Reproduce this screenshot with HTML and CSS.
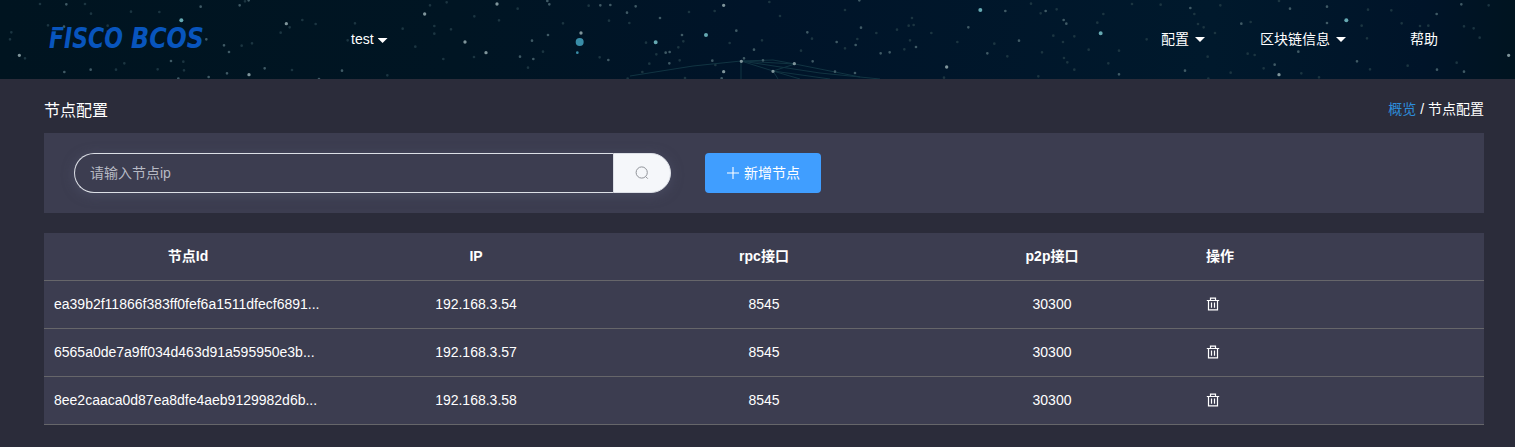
FILE: index.html
```html
<!DOCTYPE html>
<html lang="zh-CN">
<head>
<meta charset="utf-8">
<title>节点配置</title>
<link rel="stylesheet" href="styles.css">
</head>
<body>
<header class="header">
  <svg class="sky" width="1515" height="79" viewBox="0 0 1515 79" aria-hidden="true">
    <defs>
      <linearGradient id="night"><stop offset="0" stop-color="#001420"/><stop offset=".3" stop-color="#001523"/><stop offset=".5" stop-color="#001429"/><stop offset=".8" stop-color="#00192c"/><stop offset=".94" stop-color="#001429"/><stop offset="1" stop-color="#001420"/></linearGradient>
    </defs>
    <rect width="1515" height="79" fill="url(#night)"/>
    <g class="lines">
      <path d="M630 76L693 66L741 61L795 64L860 77M741 61L773 71L795 64M741 61L741 79M741 61L820 73L880 79M773 71L778 79M773 71L800 79M773 71L830 79M741 61L773 60L795 64"/>
    </g>
    <g transform="scale(.33333)">
      <path class="star faint" d="M120 12h0M144 76h0M273 41h0M34 97h0M30 118h0M255 12h0M478 36h0M323 77h0M348 209h0M373 190h0M473 208h0M550 185h0M552 211h0M75 175h0M725 137h0M756 130h0M842 98h0M869 82h0M876 210h0M1043 121h0M1065 70h0M947 72h0M907 60h0M1162 226h0M735 4h0M393 35h0M323 94h0"/>
      <path class="star mid" d="M199 13h0M192 80h0M602 20h0M719 16h0M193 216h0M272 209h0M619 118h0M672 136h0M687 156h0M513 183h0M681 220h0M626 231h0M794 205h0M1026 212h0M746 1h0M535 236h0M957 237h0"/>
      <path class="star bright" d="M58 166h0M747 224h0M859 71h0"/>
      <path class="star cyan" d="M544 61h0"/>
    </g>
    <g transform="translate(400) scale(.33333)">
      <path class="star faint" d="M90 16h0M103 78h0M103 101h0M46 140h0M140 7h0M223 49h0M297 61h0M489 70h0M627 62h0M688 69h0M429 155h0M384 203h0M130 177h0M222 171h0M353 26h0M566 17h0M599 172h0M748 191h0M727 216h0M835 142h0M850 124h0M839 181h0M855 234h0M944 33h0M989 129h0M1086 121h0M1140 48h0M1108 6h0M946 195h0M683 236h0M738 128h0M769 163h0M8 86h0M153 88h0M867 36h0"/>
      <path class="star mid" d="M442 3h0M448 13h0M601 16h0M631 15h0M707 19h0M681 38h0M444 105h0M396 122h0M360 170h0M400 177h0M625 180h0M780 54h0M846 105h0M797 158h0M809 156h0M808 190h0M1009 92h0M1062 149h0M937 182h0M1089 181h0M1032 175h0M965 235h0"/>
      <path class="star bright" d="M74 42h0M291 12h0M195 126h0M258 158h0M543 99h0M971 16h0M971 215h0M1024 184h0M1119 214h0M1183 191h0"/>
      <path class="star cyan" d="M767 127h0M918 105h0"/>
      <path class="star cyan tiny" d="M532 158h0"/>
      <path class="star giant" d="M539 126h0"/>
    </g>
    <g transform="translate(800) scale(.33333)">
      <path class="star faint" d="M36 116h0M3 152h0M135 30h0M135 145h0M172 117h0M229 99h0M291 89h0M341 75h0M326 77h0M330 121h0M313 148h0M583 131h0M472 126h0M394 99h0M722 40h0M770 28h0M760 107h0M789 126h0M823 109h0M892 68h0M910 42h0M866 149h0M792 174h0M823 209h0M802 187h0M925 190h0M957 152h0M726 157h0M715 229h0M693 11h0M622 169h0M996 12h0M432 233h0M336 54h0"/>
      <path class="star mid" d="M22 97h0M38 184h0M183 83h0M110 126h0M167 135h0M105 215h0M165 219h0M178 1h0M242 160h0M269 157h0M348 141h0M616 33h0M505 82h0M657 122h0M562 160h0M737 33h0M791 60h0M799 71h0"/>
      <path class="star bright" d="M440 201h0"/>
      <path class="star cyan" d="M541 30h0M902 100h0"/>
    </g>
    <g transform="translate(1115) scale(.33333)">
      <path class="star faint" d="M95 118h0M137 14h0M238 42h0M316 16h0M249 72h0M266 82h0M300 99h0M407 66h0M278 170h0M347 218h0M419 165h0M398 161h0M492 3h0M446 205h0M559 220h0M612 232h0M765 208h0M756 115h0M740 77h0M860 70h0M915 78h0M940 77h0M1047 79h0M1076 85h0M1121 16h0M1025 188h0M878 197h0M829 31h0M759 29h0M1094 113h0M280 236h0"/>
      <path class="star mid" d="M12 223h0M226 24h0M379 71h0M525 26h0M636 20h0M636 69h0M210 212h0M479 194h0M550 155h0M726 184h0M965 42h0M1039 13h0M966 209h0M1047 215h0M915 96h0"/>
      <path class="star bright" d="M492 224h0M1181 166h0"/>
      <path class="star cyan" d="M694 61h0"/>
    </g>
  </svg>
  <svg class="logo" width="164" height="48" viewBox="0 0 164 48">
    <text class="logo-text" x="3" y="33" textLength="74" lengthAdjust="spacingAndGlyphs">FISCO</text>
    <text class="logo-text" x="85" y="33" textLength="73" lengthAdjust="spacingAndGlyphs">BCOS</text>
    <path class="logo-cut" d="M4 15.8h14"/>
  </svg>
  <div class="group">test<i class="caret"></i></div>
  <nav class="nav">
    <span class="nav-item config">配置<i class="caret wide"></i></span>
    <span class="nav-item chain">区块链信息<i class="caret wide"></i></span>
    <span class="nav-item">帮助</span>
  </nav>
</header>
<main class="main">
  <div class="titlebar">
    <h1 class="title">节点配置</h1>
    <div class="crumbs"><a class="crumb-link">概览</a> / 节点配置</div>
  </div>
  <section class="toolbar">
    <div class="search">
      <input class="search-input" placeholder="请输入节点ip">
      <button class="search-button" aria-label="search">
        <svg width="14" height="14" viewBox="0 0 14 14"><circle cx="6.7" cy="6.5" r="5.6"/><path d="M10.8 10.7l2 2"/></svg>
      </button>
    </div>
    <button class="add">
      <svg width="14" height="14" viewBox="0 0 14 14"><path d="M7 1v12M1 7h12"/></svg><span class="add-label">新增节点</span>
    </button>
  </section>
  <svg class="symbols" width="0" height="0"><symbol id="trash" viewBox="0 0 14 14"><path d="M.8 3.5h12.4M4.5 3V1.2h5V3M2.5 3.5v9.3h9V3.5M5.5 5.5v5.2M8.5 5.5v5.2"/></symbol></svg>
  <table class="table">
    <thead><tr><th>节点Id</th><th>IP</th><th>rpc接口</th><th>p2p接口</th><th class="left">操作</th></tr></thead>
    <tbody>
      <tr><td class="left">ea39b2f11866f383ff0fef6a1511dfecf6891...</td><td>192.168.3.54</td><td>8545</td><td>30300</td><td class="left"><svg class="trash"><use href="#trash"/></svg></td></tr>
      <tr><td class="left">6565a0de7a9ff034d463d91a595950e3b...</td><td>192.168.3.57</td><td>8545</td><td>30300</td><td class="left"><svg class="trash"><use href="#trash"/></svg></td></tr>
      <tr><td class="left">8ee2caaca0d87ea8dfe4aeb9129982d6b...</td><td>192.168.3.58</td><td>8545</td><td>30300</td><td class="left"><svg class="trash"><use href="#trash"/></svg></td></tr>
    </tbody>
  </table>
</main>
</body>
</html>
```
FILE: styles.css
```css
* { box-sizing: border-box; }
body { margin: 0; height: 447px; overflow: hidden; background: #2b2c3a; color: #fff; font: 14px "Liberation Sans", "Noto Sans CJK SC", sans-serif; }
.header { position: relative; height: 79px; display: flex; align-items: center; padding-left: 46px; }
.sky { position: absolute; inset: 0; }
.star { fill: none; stroke-linecap: round; }
.faint { stroke: #1b3541; stroke-width: 8; }
.mid { stroke: #3f5a65; stroke-width: 8; }
.bright { stroke: #7f959b; stroke-width: 10; }
.cyan { stroke: #65a9b2; stroke-width: 12; }
.tiny { stroke-width: 8; stroke: #398da8; }
.giant { stroke: #398da8; stroke-width: 24; }
.lines { fill: none; stroke: #113442; stroke-width: 1; }
.logo { position: relative; flex: none; margin-top: -1px; overflow: visible; }
.logo-text { font: italic 700 27.5px "DejaVu Sans", sans-serif; fill: #0855bd; }
.logo-cut { stroke: #001420; stroke-width: 1; }
.group, .nav { position: relative; display: flex; align-items: center; line-height: 20px; margin-top: -2px; }
.group { margin-left: 141px; }
.caret { width: 10px; height: 5px; margin: 4px 0 0 4px; background: #fff; clip-path: polygon(0 0, 100% 0, 50% 100%); }
.caret.wide { margin: 2px 0 0 6px; }
.nav { margin-left: auto; padding-right: 77px; }
.nav-item { display: flex; align-items: center; }
.config { margin-right: 55px; }
.chain { margin-right: 64px; }
.main { padding: 0 31px 0 44px; }
.titlebar { height: 54px; display: flex; justify-content: space-between; align-items: center; padding-top: 8px; }
.title { margin: 2px 0 0; font-size: 16px; font-weight: 400; line-height: 24px; }
.crumbs { line-height: 20px; margin-top: -3px; }
.crumb-link { color: #2d8cdb; }
.toolbar { height: 80px; margin-bottom: 20px; padding: 20px 30px; display: flex; gap: 34px; background: #3c3d50; }
.search { width: 597px; height: 40px; display: flex; border-radius: 20px; box-shadow: 0 2px 12px rgba(84, 88, 112, .55); }
.search-input { flex: 1; min-width: 0; padding: 0 15px; border: 1px solid #dcdfe6; border-right: 0; border-radius: 20px 0 0 20px; background: #3c3d50; font: inherit; color: #fff; }
.search-input::placeholder { color: #b7bac4; opacity: 1; }
.search-button { width: 58px; padding: 0; border: 1px solid #dcdfe6; border-radius: 0 20px 20px 0; background: #f5f7fa; display: flex; align-items: center; justify-content: center; }
.search-button svg { fill: none; stroke: #909399; }
.add { width: 116px; height: 40px; padding: 0; border: 0; border-radius: 4px; background: #409eff; color: #fff; font: inherit; display: flex; align-items: center; justify-content: center; gap: 4px; }
.add svg { fill: none; stroke: #fff; stroke-width: 1.1; }
.add-label { margin-top: -2px; }
.symbols { position: absolute; }
.table { width: 100%; table-layout: fixed; border-collapse: separate; border-spacing: 0; background: #3c3d50; }
.table th, .table td { height: 48px; padding: 0 10px 2px; border-bottom: 1px solid #66666a; text-align: center; line-height: 20px; white-space: nowrap; }
.table .left { text-align: left; }
.trash { display: block; width: 14px; height: 14px; fill: none; stroke: #fff; stroke-width: 1.2; }
```
